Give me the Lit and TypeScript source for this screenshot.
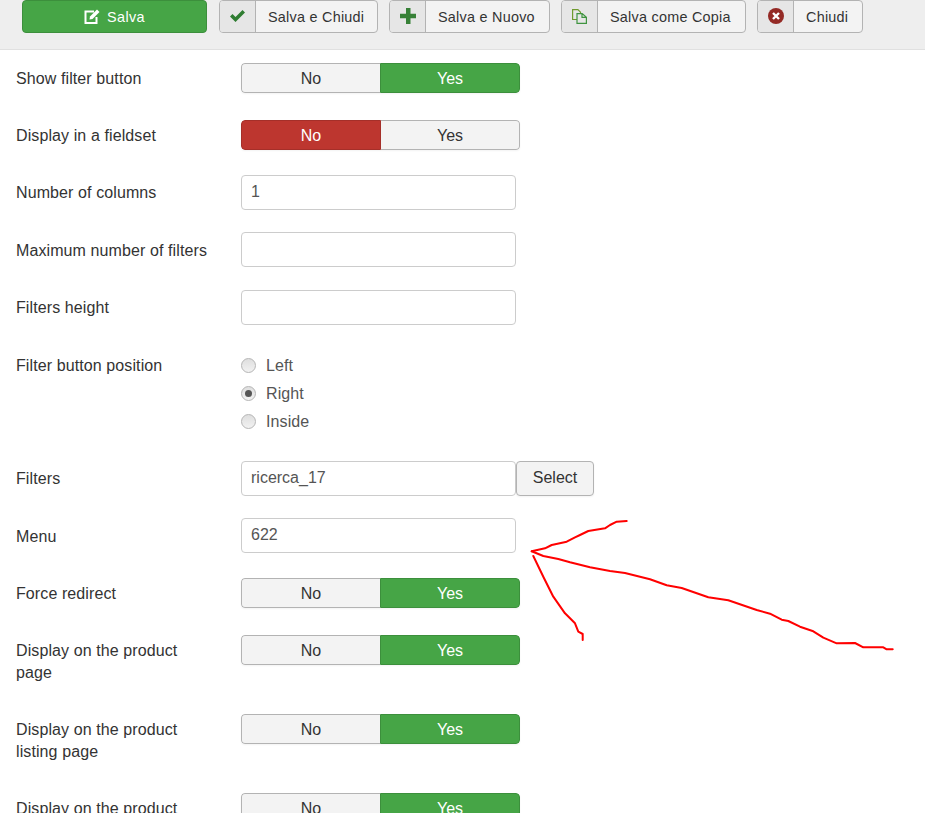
import { LitElement, html, css, svg } from "lit";
import { customElement } from "lit/decorators.js";

const P = (s: string) =>
  s.trim().split(/\s+/).map((c) => {
    const [x, y] = c.split(",").map(Number);
    return `${(500 + x / 3).toFixed(1)},${(450 + y / 3).toFixed(1)}`;
  }).join(" ");

const L1 = P("380,213 350,215 330,225 315,235 265,243 240,255 225,262 200,275 155,285 135,295 95,304");
const L2 = P("95,304 130,318 175,327 210,337 270,352 330,363 375,369 450,388 500,406 545,414 625,442 685,451 770,480 810,491 845,509 865,513 900,530 940,544 970,563 1010,580 1065,579 1090,592 1150,592 1160,598 1178,598");
const L3 = P("100,318 130,380 160,440 195,490 225,520 235,545 248,552 248,570");

@customElement("app-root")
export class AppRoot extends LitElement {
  static styles = css`
    :host {
      display: block;
      position: relative;
      width: 925px;
      height: 813px;
      overflow: hidden;
      background: #fff;
      font-family: "Liberation Sans", Arial, sans-serif;
      font-size: 16px;
      color: #333;
    }
    .toolbar {
      box-sizing: border-box;
      height: 50px;
      background: #eee;
      border-bottom: 1px solid #e0e0e0;
      display: flex;
      align-items: flex-start;
      padding-left: 22px;
      gap: 11px;
    }
    .save {
      box-sizing: border-box;
      width: 185px;
      height: 33px;
      margin-right: 1px;
      background: #46a546;
      border: 1px solid #3c8f3c;
      border-radius: 4px;
      color: #fff;
      font-size: 14.4px;
      letter-spacing: 0.4px;
      display: flex;
      align-items: center;
      justify-content: center;
      gap: 6px;
    }
    .btn {
      box-sizing: border-box;
      height: 33px;
      background: #f3f3f3;
      border: 1px solid #b3b3b3;
      border-radius: 4px;
      display: flex;
      font-size: 14.4px;
      letter-spacing: 0.25px;
      color: #333;
    }
    .b1 { width: 159px; }
    .b2 { width: 161px; }
    .b3 { width: 185px; }
    .b4 { width: 106px; }
    .btn .ic {
      width: 36px;
      flex: none;
      background: #e6e6e6;
      border-right: 1px solid #b3b3b3;
      display: flex;
      align-items: center;
      justify-content: center;
      border-radius: 3px 0 0 3px;
      padding-bottom: 1px;
      box-sizing: border-box;
    }
    .btn .tx {
      flex: 1;
      padding-left: 12px;
      display: flex;
      align-items: center;
      white-space: nowrap;
    }
    .form {
      padding: 10px 0 0 16px;
    }
    .row {
      display: flex;
      height: 35.4px;
      margin-bottom: 22px;
    }
    .row.two { height: 57px; }
    .row.radios { height: 91.6px; }
    .lab {
      width: 225px;
      flex: none;
      box-sizing: border-box;
      padding-right: 30px;
      line-height: 22px;
      padding-top: 7.6px;
      letter-spacing: 0.1px;
    }
    .ctl { height: 35px; display: flex; align-items: center; }
    .toggle {
      width: 279px;
      height: 30px;
      box-sizing: border-box;
      display: flex;
      border-radius: 4px;
      box-shadow: 0 1px 2px rgba(0, 0, 0, 0.05);
      overflow: hidden;
    }
    .toggle span {
      flex: 1;
      box-sizing: border-box;
      display: flex;
      align-items: center;
      justify-content: center;
      background: #f3f3f3;
      border: 1px solid #b3b3b3;
      padding-top: 2px;
    }
    .toggle span:first-child { border-radius: 4px 0 0 4px; border-right: 0; }
    .toggle span:last-child { border-radius: 0 4px 4px 0; border-left: 0; }
    .toggle span.yes { background: #46a546; border: 1px solid #3c8f3c; color: #fff; }
    .toggle span.no { background: #bd362f; border: 1px solid #a52f29; color: #fff; }
    .input {
      box-sizing: border-box;
      width: 275px;
      height: 35px;
      border: 1px solid #ccc;
      border-radius: 4px;
      padding: 0 9px;
      display: flex;
      align-items: center;
      color: #555;
      background: #fff;
    }
    .select {
      box-sizing: border-box;
      width: 78px;
      height: 35px;
      background: #f3f3f3;
      border: 1px solid #b3b3b3;
      border-radius: 4px;
      display: flex;
      align-items: center;
      justify-content: center;
      box-shadow: 0 1px 2px rgba(0, 0, 0, 0.05);
    }
    .rlist { display: flex; flex-direction: column; padding-top: 5px; }
    .r { height: 28px; display: flex; align-items: center; gap: 10px; color: #555; letter-spacing: 0.1px; }
    .dot {
      box-sizing: border-box;
      width: 15px;
      height: 15px;
      border-radius: 50%;
      border: 1px solid #b5b5b5;
      background: linear-gradient(#dedede, #f2f2f2);
      display: flex;
      align-items: center;
      justify-content: center;
    }
    .dot.on::after {
      content: "";
      width: 7px;
      height: 7px;
      border-radius: 50%;
      background: #555;
    }
    .arrow { position: absolute; left: 0; top: 0; pointer-events: none; }
    .arrow polyline { fill: none; stroke: #f00; stroke-width: 2; stroke-linejoin: round; stroke-linecap: round; }
  `;

  private btn(cls: string, label: string, icon: unknown) {
    return html`<div class="btn ${cls}"><div class="ic">${icon}</div><div class="tx">${label}</div></div>`;
  }

  private toggle(state: "yes" | "no") {
    return html`<div class="ctl"><div class="toggle">
      <span class=${state === "no" ? "no" : ""}>No</span>
      <span class=${state === "yes" ? "yes" : ""}>Yes</span>
    </div></div>`;
  }

  render() {
    const edit = svg`<svg width="17" height="15" viewBox="0 0 17 15"><path fill="none" stroke="#fff" stroke-width="2" d="M10 2.500H1.500v11.500h11V8"/><path fill="#fff" d="M5.500 10.500 6 7.500 13 0.500 15.500 3 8.500 10z"/></svg>`;
    const check = svg`<svg width="15" height="12" viewBox="0 0 15 12"><path fill="#2f7d32" d="M0 6.500 2.500 4l3 3L12.500 0 15 2.500 5.500 12z"/></svg>`;
    const plus = svg`<svg width="16" height="16" viewBox="0 0 16 16"><path fill="#378137" d="M6 0h4.500v5.700H16v4.600h-5.500V16H6v-5.700H0V5.700h6z"/></svg>`;
    const copy = svg`<svg width="15" height="15" viewBox="0 0 15 15"><path fill="none" stroke="#6f9a2e" stroke-width="1.200" d="M5 10.500H.6V.6h5.300L8.500 3.200v1.300"/><path fill="none" stroke="#3f9440" stroke-width="1.200" d="M5 4.600h5.200l4.200 3.600v6.200H5zM10 4.600v3.800h4.400"/></svg>`;
    const cancel = svg`<svg width="16" height="16" viewBox="0 0 16 16"><circle cx="8" cy="8" r="8" fill="#942a25"/><path stroke="#fff" stroke-width="2.400" d="M5 5l6 6M11 5l-6 6"/></svg>`;
    return html`
      <div class="toolbar">
        <div class="save">${edit}<span>Salva</span></div>
        ${this.btn("b1", "Salva e Chiudi", check)}
        ${this.btn("b2", "Salva e Nuovo", plus)}
        ${this.btn("b3", "Salva come Copia", copy)}
        ${this.btn("b4", "Chiudi", cancel)}
      </div>
      <div class="form">
        <div class="row"><div class="lab">Show filter button</div>${this.toggle("yes")}</div>
        <div class="row"><div class="lab">Display in a fieldset</div>${this.toggle("no")}</div>
        <div class="row"><div class="lab">Number of columns</div><div class="input">1</div></div>
        <div class="row"><div class="lab">Maximum number of filters</div><div class="input"></div></div>
        <div class="row"><div class="lab">Filters height</div><div class="input"></div></div>
        <div class="row radios"><div class="lab">Filter button position</div>
          <div class="rlist">
            <div class="r"><span class="dot"></span>Left</div>
            <div class="r"><span class="dot on"></span>Right</div>
            <div class="r"><span class="dot"></span>Inside</div>
          </div>
        </div>
        <div class="row"><div class="lab">Filters</div><div class="input">ricerca_17</div><div class="select">Select</div></div>
        <div class="row"><div class="lab">Menu</div><div class="input">622</div></div>
        <div class="row"><div class="lab">Force redirect</div>${this.toggle("yes")}</div>
        <div class="row two"><div class="lab">Display on the product page</div>${this.toggle("yes")}</div>
        <div class="row two"><div class="lab">Display on the product listing page</div>${this.toggle("yes")}</div>
        <div class="row two"><div class="lab">Display on the product</div>${this.toggle("yes")}</div>
      </div>
      <svg class="arrow" width="925" height="813">
        <polyline points=${L1}></polyline>
        <polyline points=${L2}></polyline>
        <polyline points=${L3}></polyline>
      </svg>
    `;
  }
}
